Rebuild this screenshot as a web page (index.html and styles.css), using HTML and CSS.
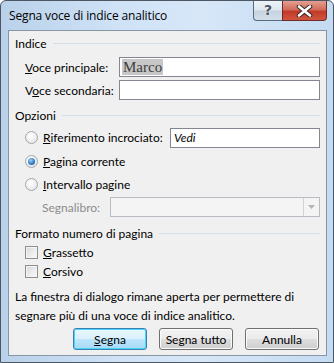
FILE: index.html
```html
<!DOCTYPE html>
<html>
<head>
<meta charset="utf-8">
<link rel="stylesheet" href="styles.css">
</head>
<body>
<div class="window">
  <div class="titlebar">
    <div class="title">Segna voce di indice analitico</div>
    <div class="caption-buttons">
      <div class="cbtn help">?</div>
      <div class="cbtn close">
        <svg width="17" height="12" viewBox="0 0 17 12">
          <path d="M3 1.5 L14 10.5 M14 1.5 L3 10.5" stroke="#3b2a28" stroke-width="4.6" stroke-linecap="round" fill="none"/>
          <path d="M3 1.5 L14 10.5 M14 1.5 L3 10.5" stroke="#ffffff" stroke-width="2.6" stroke-linecap="round" fill="none"/>
        </svg>
      </div>
    </div>
  </div>
  <div class="client">
    <div class="group-head g1"><span>Indice</span><i></i></div>
    <div class="field-row r1">
      <label class="lbl"><u>V</u>oce principale:</label>
      <div class="input"><span class="sel">Marco</span></div>
    </div>
    <div class="field-row r2">
      <label class="lbl">V<u>o</u>ce secondaria:</label>
      <div class="input"></div>
    </div>

    <div class="group-head g2"><span>Opzioni</span><i></i></div>
    <div class="opt-row o1">
      <span class="radio"></span>
      <span class="opt-lbl"><u>R</u>iferimento incrociato:</span>
      <div class="input vedi"><em>Vedi</em></div>
    </div>
    <div class="opt-row o2">
      <span class="radio checked"></span>
      <span class="opt-lbl"><u>P</u>agina corrente</span>
    </div>
    <div class="opt-row o3">
      <span class="radio"></span>
      <span class="opt-lbl"><u>I</u>ntervallo pagine</span>
    </div>
    <div class="bm-row">
      <span class="bm-lbl">Segnalibro:</span>
      <div class="combo"><div class="combo-btn"><svg width="7" height="4" viewBox="0 0 7 4"><path d="M0 0 H7 L3.5 4 Z" fill="#b4b4b4"/></svg></div></div>
    </div>

    <div class="group-head g3"><span>Formato numero di pagina</span><i></i></div>
    <div class="chk-row c1"><span class="check"></span><span class="opt-lbl"><u>G</u>rassetto</span></div>
    <div class="chk-row c2"><span class="check"></span><span class="opt-lbl"><u>C</u>orsivo</span></div>

    <p class="note">La finestra di dialogo rimane aperta per permettere di segnare più di una voce di indice analitico.</p>

    <div class="buttons">
      <div class="btn default"><u>S</u>egna</div>
      <div class="btn">Segna tutto</div>
      <div class="btn">Annulla</div>
    </div>
  </div>
</div>
</body>
</html>
```
FILE: styles.css
```css
* { box-sizing: border-box; }
html, body { margin: 0; padding: 0; background: #ffffff; }
body {
  font-family: "Lato", "Noto Sans", "DejaVu Sans", sans-serif;
  font-size: 12px;
  line-height: 15px;
  color: #000;
}
.window {
  width: 334px;
  height: 363px;
  border: 1px solid #4c5763;
  border-radius: 6px 6px 0 0;
  background: linear-gradient(90deg, #b9d1ea 0%, #cfe2f6 35%, #d7e7f8 60%, #c4dbf2 100%);
  position: relative;
  overflow: hidden;
}
.titlebar {
  height: 29px;
  display: flex;
  justify-content: space-between;
  align-items: flex-start;
}
.title {
  padding: 7px 0 0 8px;
  font-family: "Open Sans", "Noto Sans", sans-serif;
  font-size: 12px;
  letter-spacing: -0.15px;
  color: #000;
}
.caption-buttons {
  display: flex;
  margin-right: 6px;
}
.cbtn {
  height: 20px;
  border: 1px solid #5a6a7e;
  border-top: none;
  display: flex;
  align-items: center;
  justify-content: center;
}
.help {
  width: 29px;
  border-radius: 0 0 0 4px;
  background: linear-gradient(180deg, #eef3f8 0%, #dde6ef 45%, #c6d3e0 55%, #d3dee9 100%);
  color: #4a5664;
  font-weight: bold;
  font-size: 14px;
  font-family: "DejaVu Sans", sans-serif;
  text-shadow: 0 0 2px #fff;
  border-right: none;
}
.close {
  width: 45px;
  border-radius: 0 0 4px 0;
  border-color: #6d2b26;
  background: linear-gradient(180deg, #e4a091 0%, #d26c5c 45%, #c23a28 55%, #d0553f 100%);
}
.client {
  margin: 0 6px 0 7px;
  height: 326px;
  border: 1px solid #8895a4;
  background: #f0f0f0;
  padding: 2px 6px 0 6px;
  display: flex;
  flex-direction: column;
}
.group-head {
  height: 20px;
  display: flex;
  align-items: center;
}
.group-head span { white-space: nowrap; }
.group-head i {
  flex: 1;
  height: 1px;
  background: #d5dfe8;
  margin-left: 6px;
}
.g2 { margin-top: 5px; }
.g3 { margin-top: 6px; }
.field-row {
  display: flex;
  align-items: center;
  height: 20px;
  padding-left: 10px;
}
.r1 { margin-top: 4px; }
.r2 { margin-top: 3px; }
.lbl { width: 94px; white-space: nowrap; }
.input {
  flex: 1;
  height: 20px;
  border: 1px solid #828790;
  background: #fff;
  display: flex;
  align-items: center;
  padding-left: 2px;
}
.sel {
  background: #c7c7c7;
  color: #3c3c3c;
  font-family: "Liberation Serif", serif;
  font-size: 15px;
  line-height: 16px;
  padding: 0 1px;
}
.opt-row {
  display: flex;
  align-items: center;
  height: 23px;
  padding-left: 10px;
}
.o1 { margin-top: 1px; }
.o2 { height: 24px; }
.radio {
  width: 13px;
  height: 13px;
  border-radius: 50%;
  border: 1px solid #a2a6ab;
  background: radial-gradient(circle at 40% 35%, #ffffff 0%, #f0f0f0 50%, #dcdcdc 100%);
  margin-right: 5px;
  flex: none;
  position: relative;
}
.radio.checked::after {
  content: "";
  position: absolute;
  left: 2px; top: 2px;
  width: 7px; height: 7px;
  border-radius: 50%;
  background: radial-gradient(circle at 40% 35%, #9fd3f8 0%, #2f7fc7 55%, #164f8f 100%);
}
.opt-lbl { white-space: nowrap; }
.vedi {
  flex: none;
  width: 150px;
  height: 20px;
  margin-left: auto;
  padding-left: 3px;
}
.vedi em { font-style: italic; }
.bm-row {
  display: flex;
  align-items: center;
  height: 20px;
  margin-top: 1px;
  padding-left: 27px;
}
.bm-lbl { color: #8c8c8c; width: 68px; }
.combo {
  flex: 1;
  height: 20px;
  border: 1px solid #b8bcc2;
  background: #f4f4f4;
  display: flex;
  justify-content: flex-end;
}
.combo-btn {
  width: 16px;
  height: 18px;
  border-left: 1px solid #d0d3d6;
  display: flex;
  align-items: center;
  justify-content: center;
}
.chk-row {
  display: flex;
  align-items: center;
  height: 19px;
  padding-left: 10px;
}
.check {
  width: 13px;
  height: 13px;
  border: 1px solid #8f8f8f;
  background: linear-gradient(135deg, #d8d8d8 0%, #eeeeee 60%, #fafafa 100%);
  box-shadow: inset 0 0 0 1px #f4f4f4;
  margin-right: 5px;
  flex: none;
}
.note {
  margin: 6px 0 0 0;
  line-height: 19px;
}
.buttons {
  display: flex;
  justify-content: flex-end;
  gap: 12px;
  margin-top: 3px;
  padding-right: 1px;
}
.btn {
  width: 74px;
  height: 22px;
  border: 1px solid #707070;
  border-radius: 3px;
  background: linear-gradient(180deg, #f2f2f2 0%, #ebebeb 50%, #dddddd 51%, #cfcfcf 100%);
  display: flex;
  align-items: center;
  justify-content: center;
  box-shadow: inset 0 0 0 1px #fbfbfb;
}
.btn.default {
  border-color: #3c7fb1;
  box-shadow: inset 0 0 0 1px #48d5f7;
  background: linear-gradient(180deg, #eaf6fd 0%, #d9f0fc 50%, #bee6fd 51%, #a7d9f5 100%);
}
```
